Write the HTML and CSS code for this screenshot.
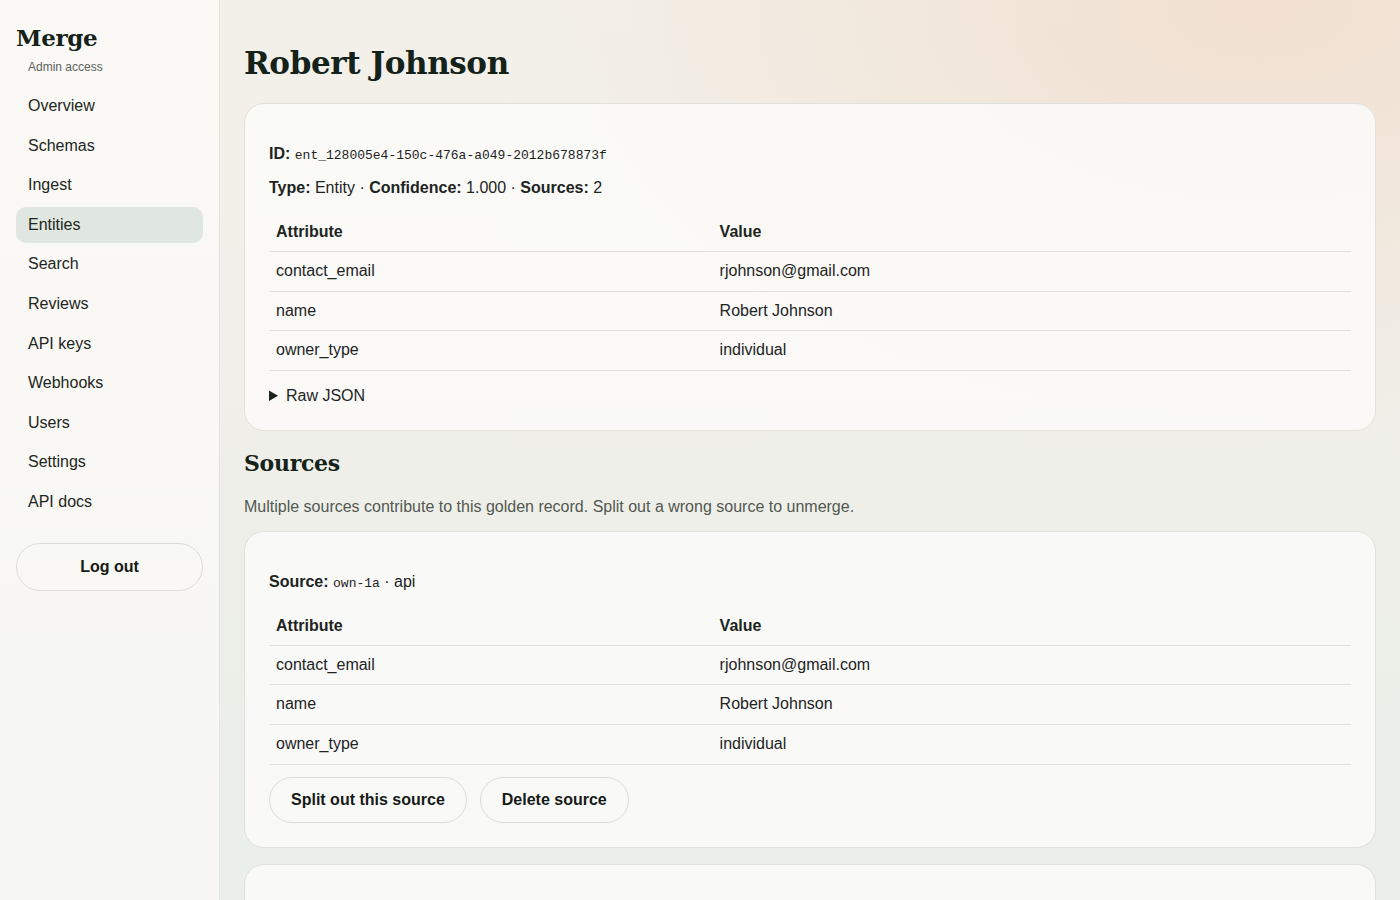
FILE: index.html
```html
<!DOCTYPE html>
<html lang="en">
<head>
    <meta charset="UTF-8">
    <meta name="viewport" content="width=device-width, initial-scale=1.0">
    <title>Robert Johnson · Merge</title>
    <link rel="stylesheet" href="styles.css">
</head>
<body>
<div class="app">
    <aside class="sidebar">
        <div class="brand">Merge</div>
        <div class="role">Admin access</div>
        <nav class="nav">
            <a href="#">Overview</a>
            <a href="#">Schemas</a>
            <a href="#">Ingest</a>
            <a href="#" class="active">Entities</a>
            <a href="#">Search</a>
            <a href="#">Reviews</a>
            <a href="#">API keys</a>
            <a href="#">Webhooks</a>
            <a href="#">Users</a>
            <a href="#">Settings</a>
            <a href="#">API docs</a>
        </nav>
        <button type="button" class="btn logout">Log out</button>
    </aside>

    <main class="main">
        <h1>Robert Johnson</h1>

        <section class="card">
            <p class="line"><b>ID:</b> <code>ent_128005e4-150c-476a-a049-2012b678873f</code></p>
            <p class="line meta"><b>Type:</b> Entity · <b>Confidence:</b> 1.000 · <b>Sources:</b> 2</p>
            <table class="attrs">
                <thead>
                    <tr><th>Attribute</th><th>Value</th></tr>
                </thead>
                <tbody>
                    <tr><td>contact_email</td><td>rjohnson@gmail.com</td></tr>
                    <tr><td>name</td><td>Robert Johnson</td></tr>
                    <tr><td>owner_type</td><td>individual</td></tr>
                </tbody>
            </table>
            <details class="raw">
                <summary>Raw JSON</summary>
            </details>
        </section>

        <h2>Sources</h2>
        <p class="hint">Multiple sources contribute to this golden record. Split out a wrong source to unmerge.</p>

        <section class="card">
            <p class="line"><b>Source:</b> <code>own-1a</code> · api</p>
            <table class="attrs">
                <thead>
                    <tr><th>Attribute</th><th>Value</th></tr>
                </thead>
                <tbody>
                    <tr><td>contact_email</td><td>rjohnson@gmail.com</td></tr>
                    <tr><td>name</td><td>Robert Johnson</td></tr>
                    <tr><td>owner_type</td><td>individual</td></tr>
                </tbody>
            </table>
            <div class="actions">
                <button type="button" class="btn">Split out this source</button>
                <button type="button" class="btn">Delete source</button>
            </div>
        </section>

        <section class="card">
            <p class="line"><b>Source:</b> <code>own-1b</code> · csv</p>
            <table class="attrs">
                <thead>
                    <tr><th>Attribute</th><th>Value</th></tr>
                </thead>
                <tbody>
                    <tr><td>contact_email</td><td>rjohnson@gmail.com</td></tr>
                    <tr><td>name</td><td>Robert Johnson</td></tr>
                </tbody>
            </table>
        </section>
    </main>
</div>
</body>
</html>
```

FILE: styles.css
```css
body {
    margin: 0;
    font-family: "Liberation Sans", Arial, sans-serif;
    font-size: 16px;
    color: #1d241f;
    background: #f1efe9;
}
.app {
    display: flex;
    min-height: 100vh;
}

/* sidebar */
.sidebar {
    width: 187px;
    flex-shrink: 0;
    padding: 24px 16px;
    background: linear-gradient(180deg, #faf9f6 0%, #f6f6f3 100%);
    border-right: 1px solid #e5e3de;
}
.brand {
    font-family: "DejaVu Serif", Georgia, serif;
    font-weight: bold;
    font-size: 23px;
    line-height: 28px;
    color: #14221a;
    letter-spacing: -0.3px;
}
.role {
    margin: 8px 0 0 12px;
    font-size: 12px;
    line-height: 15px;
    color: #5d615d;
}
.nav {
    display: flex;
    flex-direction: column;
    gap: 3.6px;
    margin-top: 13px;
}
.nav a {
    display: block;
    padding: 8px 12px;
    line-height: 20px;
    color: #1d2620;
    text-decoration: none;
    border-radius: 10px;
}
.nav a.active {
    background: #e0e6e0;
}
.btn {
    font-family: inherit;
    font-size: 16px;
    font-weight: bold;
    line-height: 20px;
    color: #161a17;
    background: transparent;
    border: 1px solid #dddcd7;
    border-radius: 999px;
    padding: 12px 21px;
    cursor: pointer;
}
.logout {
    display: block;
    width: 100%;
    margin-top: 23px;
    padding: 13px 0;
}

/* main */
.main {
    flex: 1;
    padding: 45px 24px 24px;
    background:
        radial-gradient(720px 440px at 1040px 0px, rgba(241, 220, 202, 0.8), rgba(241, 220, 202, 0) 100%),
        linear-gradient(180deg, #f3f0e9 0px, #efefe9 500px, #eaefe9 900px, #e8eee8 100%);
}
h1 {
    margin: 0 0 21px;
    font-family: "DejaVu Serif", Georgia, serif;
    font-size: 31px;
    line-height: 37px;
    color: #14221a;
    letter-spacing: -0.4px;
}
h2 {
    margin: 19px 0 20px;
    font-family: "DejaVu Serif", Georgia, serif;
    font-size: 22px;
    line-height: 27px;
    color: #14221a;
    letter-spacing: -0.3px;
}
.hint {
    margin: 0 0 14px;
    line-height: 20px;
    color: #525852;
}
.card {
    padding: 24px;
    margin-bottom: 16px;
    background: rgba(251, 250, 248, 0.88);
    border: 1px solid #e2e0db;
    border-radius: 20px;
}
.line {
    margin: 16px 0 0;
    line-height: 20px;
}
.meta {
    margin-top: 14px;
}
code {
    font-family: "Liberation Mono", "Courier New", monospace;
    font-size: 13px;
    line-height: 1;
}
.attrs {
    width: 100%;
    border-collapse: collapse;
    margin-top: 14px;
}
.attrs th, .attrs td {
    padding: 10px 7px;
    line-height: 18.6px;
    text-align: left;
    border-bottom: 1px solid #e1e0dc;
}
.attrs th {
    line-height: 19px;
}
.attrs th:first-child {
    width: 41%;
}
.raw {
    margin-top: 15px;
}
.raw summary {
    line-height: 20px;
    cursor: pointer;
}
.actions {
    display: flex;
    gap: 13px;
    margin-top: 12px;
}
```
